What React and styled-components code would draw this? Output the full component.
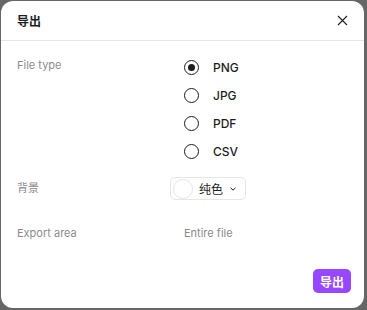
import React from "react"
import styled, { createGlobalStyle } from 'styled-components';

const PageStyle = createGlobalStyle`
  html, body {
    margin: 0;
    padding: 0;
    background: #666666;
  }

  body {
    font-family: Inter, "Noto Sans CJK SC", sans-serif;
    color: #1e1e1e;
    -webkit-font-smoothing: antialiased;
  }
`;

const Backdrop = styled.div`
  width: 367px;
  height: 310px;
  padding: 1px;
  box-sizing: border-box;
`;

const Dialog = styled.div`
  width: 363px;
  height: 307px;
  background: #fff;
  border-radius: 12px;
  display: flex;
  flex-direction: column;
  overflow: hidden;
`;

const Header = styled.header`
  height: 39px;
  display: flex;
  align-items: center;
  justify-content: space-between;
  padding: 0 14px 0 16px;
  border-bottom: 1px solid #e6e6e6;
`;

const Title = styled.h1`
  margin: 0;
  font-size: 12px;
  font-weight: 700;
  color: #1e1e1e;
`;

const CloseButton = styled.button`
  width: 16px;
  height: 16px;
  padding: 0;
  border: none;
  background: none;
  display: flex;
  align-items: center;
  justify-content: center;
  color: #1e1e1e;
`;

const Body = styled.div`
  flex: 1;
  padding: 12px 16px 0;
  display: flex;
  flex-direction: column;
`;

const Field = styled.div`
  display: grid;
  grid-template-columns: 153px 1fr;
  margin-top: ${p => p.$gap || 0}px;
`;

const Label = styled.div`
  font-size: 11px;
  line-height: ${p => p.$lh || 23}px;
  color: #8c8c8c;
`;

const RadioList = styled.div`
  display: flex;
  flex-direction: column;
  padding-left: 14px;
`;

const RadioRow = styled.label`
  height: 28px;
  display: flex;
  align-items: center;
  gap: 14px;
  font-size: 12px;
  font-weight: 500;
  color: #1e1e1e;
`;

const RadioCircle = styled.span`
  width: 15px;
  height: 15px;
  box-sizing: border-box;
  border: 1.5px solid #1e1e1e;
  border-radius: 50%;
  display: flex;
  align-items: center;
  justify-content: center;

  &::after {
    content: "";
    width: 7px;
    height: 7px;
    border-radius: 50%;
    background: #1e1e1e;
    display: ${p => (p.$checked ? 'block' : 'none')};
  }
`;

const Select = styled.button`
  width: 76px;
  height: 23px;
  box-sizing: border-box;
  padding: 0 9px 0 2px;
  border: 1px solid #e6e6e6;
  border-radius: 5px;
  background: #fff;
  display: flex;
  align-items: center;
  font-family: inherit;
  font-size: 12px;
  color: #1e1e1e;
`;

const Swatch = styled.span`
  width: 20px;
  height: 20px;
  box-sizing: border-box;
  border: 1px solid #e6e6e6;
  border-radius: 50%;
  background: #fff;
  margin-right: 6px;
`;

const SelectText = styled.span`
  flex: 1;
  text-align: left;
`;

const Value = styled.div`
  padding-left: 14px;
  font-size: 11px;
  line-height: 23px;
  color: #8c8c8c;
`;

const Footer = styled.footer`
  display: flex;
  justify-content: flex-end;
  padding: 0 13px 15px 16px;
`;

const PrimaryButton = styled.button`
  width: 38px;
  height: 24px;
  padding: 0;
  border: none;
  border-radius: 5px;
  background: #9747ff;
  color: #fff;
  font-family: inherit;
  font-size: 12px;
  font-weight: 600;
`;

const types = ['PNG', 'JPG', 'PDF', 'CSV'];

function CloseIcon() {
  return (
    <svg width="11" height="11" viewBox="0 0 11 11" fill="none">
      <path d="M1 1L10 10M10 1L1 10" stroke="currentColor" strokeWidth="1.1" />
    </svg>
  );
}

function Chevron() {
  return (
    <svg width="6" height="4" viewBox="0 0 6 4" fill="none">
      <path d="M0.5 0.8L3 3.2L5.5 0.8" stroke="#1e1e1e" strokeWidth="1" />
    </svg>
  );
}

export default function App() {
  return (
    <Backdrop>
      <PageStyle />
      <Dialog>
        <Header>
          <Title>导出</Title>
          <CloseButton aria-label="close">
            <CloseIcon />
          </CloseButton>
        </Header>
        <Body>
          <Field>
            <Label $lh={24}>File type</Label>
            <RadioList>
              {types.map(t => (
                <RadioRow key={t}>
                  <RadioCircle $checked={t === 'PNG'} />
                  {t}
                </RadioRow>
              ))}
            </RadioList>
          </Field>
          <Field $gap={12}>
            <Label>背景</Label>
            <div>
              <Select>
                <Swatch />
                <SelectText>纯色</SelectText>
                <Chevron />
              </Select>
            </div>
          </Field>
          <Field $gap={22}>
            <Label>Export area</Label>
            <Value>Entire file</Value>
          </Field>
        </Body>
        <Footer>
          <PrimaryButton>导出</PrimaryButton>
        </Footer>
      </Dialog>
    </Backdrop>
  );
}
